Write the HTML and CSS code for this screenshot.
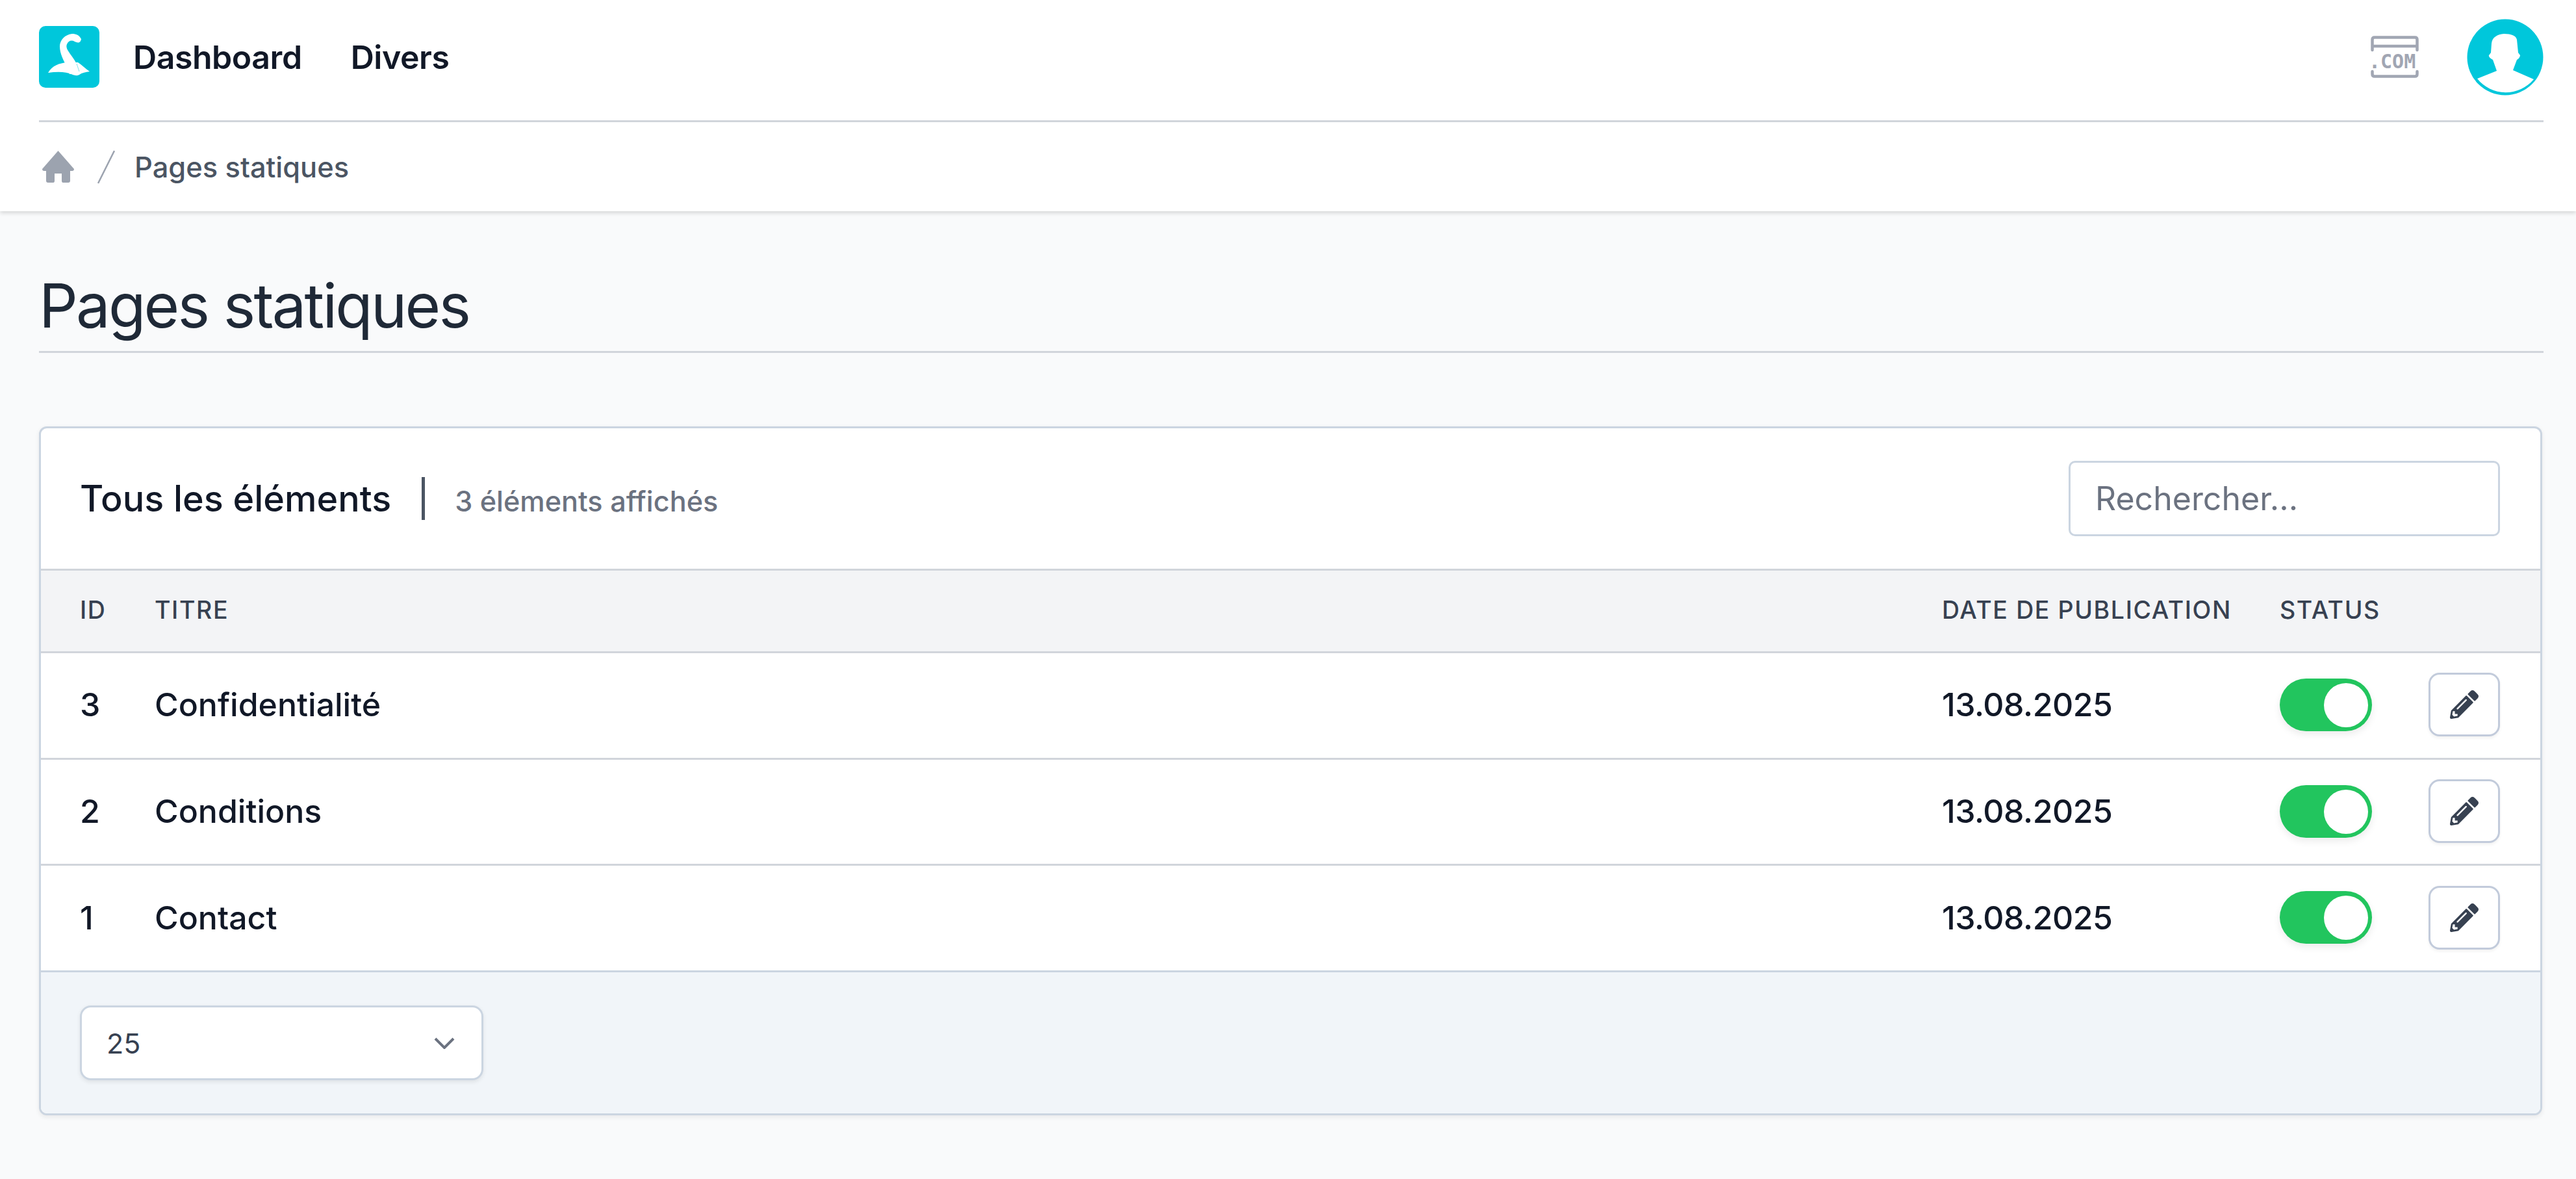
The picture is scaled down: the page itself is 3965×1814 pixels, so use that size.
FILE: index.html
```html
<!DOCTYPE html>
<html lang="fr">

<head>
     <meta charset="UTF-8">
     <title>Pages statiques</title>
     <link rel="stylesheet" href="styles.css">
</head>

<body>
     <header class="topbar">
          <nav class="mainnav">
               <div class="navleft">
                    <svg class="logo" viewBox="0 0 93 95">
                         <rect width="93" height="95" rx="10" fill="#00c7db" />
                         <path d="M65 20C62 14 57 12 51 12C40 13 32 22 32 31C32 43 38 53 43 63L47 74L63 72C61 62 55 52 48 43C44 37 41 33 43 28C45 23 50 21 55 24C59 26 64 27 65 20Z" fill="#fff" />
                         <path d="M14 72C20 61 32 57 43 56L60 56C66 60 72 66 78 70C72 71 66 72 62 75C58 77 56 76 52 75C42 70 28 70 14 72Z" fill="#fff" />
                         <path d="M58 58L62 70" stroke="#7fe3ed" stroke-width="1" fill="none" />
                    </svg>
                    <a class="navlink" href="#">Dashboard</a>
                    <a class="navlink" href="#">Divers</a>
               </div>
               <div class="navright">
                    <svg class="domain" viewBox="-4 0 78 65">
                         <path d="M2.500 22V6Q2.500 2.500 6 2.500H68Q71.500 2.500 71.500 6V22M2.500 16H71.500" fill="none" stroke="#a1a6b3" stroke-width="4.500" stroke-linecap="round" />
                         <path d="M2.500 55V59Q2.500 62.500 6 62.500H68Q71.500 62.500 71.500 59V55" fill="none" stroke="#a1a6b3" stroke-width="4.500" stroke-linecap="round" />
                         <text class="domaintext" x="-3" y="50">.COM</text>
                    </svg>
                    <svg class="avatar" viewBox="0 0 118 118">
                         <circle cx="59" cy="59" r="58.500" fill="#00c7db" />
                         <path d="M16 92L46 80L40 63C36 61 33 58 34 56L37 52L38 38C39 28 47 24 57 23C68 23 76 26 77 32L79 52L82 56C82 59 79 62 77 63L71 79L103 93A56 56 0 0 1 16 92Z" fill="#fff" />
                    </svg>
               </div>
          </nav>
          <div class="crumbs">
               <svg class="homeicon" viewBox="0 0 49 49">
                    <path d="M24.500 0L49 28Q49 31 46 31H43V46Q43 49 40 49H32Q30 49 30 46V35H19V46Q19 49 17 49H9Q6 49 6 46V31H3Q0 31 0 28Z" fill="#9ca3af" />
               </svg>
               <svg class="crumbsep" viewBox="0 0 27 52">
                    <path d="M26 1L1 51" stroke="#9ca3af" stroke-width="2.500" fill="none" />
               </svg>
               <span class="crumbtext">Pages statiques</span>
          </div>
     </header>

     <main class="content">
          <h1 class="pagetitle">Pages statiques</h1>

          <section class="card">
               <div class="cardhead">
                    <div class="cardtitle">
                         <h2>Tous les éléments</h2>
                         <span class="count">3 éléments affichés</span>
                    </div>
                    <input class="search" type="text" placeholder="Rechercher...">
               </div>

               <table class="list">
                    <thead>
                         <tr>
                              <th class="col-id">ID</th>
                              <th>Titre</th>
                              <th class="col-date">Date de publication</th>
                              <th class="col-status">Status</th>
                              <th class="col-edit"></th>
                         </tr>
                    </thead>
                    <tbody>
                         <tr>
                              <td>3</td>
                              <td>Confidentialité</td>
                              <td class="date">13.08.2025</td>
                              <td><span class="toggle"><span class="knob"></span></span></td>
                              <td><button class="editbtn"><svg viewBox="0 0 512 512"><path d="M497.900 142.100l-46.100 46.100c-4.700 4.700-12.300 4.700-17 0l-111-111c-4.700-4.700-4.700-12.300 0-17l46.100-46.100c18.700-18.700 49.100-18.700 67.900 0l60.100 60.100c18.800 18.700 18.800 49.100 0 67.900zM284.200 99.800L21.600 362.400.4 483.900c-2.900 16.400 11.400 30.600 27.800 27.800l121.500-21.300 262.600-262.600c4.700-4.700 4.700-12.300 0-17l-111-111c-4.800-4.700-12.400-4.700-17.100 0zM124.100 339.900c-5.500-5.500-5.500-14.300 0-19.800l154-154c5.500-5.500 14.300-5.500 19.800 0s5.500 14.300 0 19.800l-154 154c-5.500 5.500-14.300 5.500-19.800 0zM88 424h48v36.300l-64.500 11.300-31.100-31.100L51.700 376H88v48z" fill="#374151" /></svg></button></td>
                         </tr>
                         <tr>
                              <td>2</td>
                              <td>Conditions</td>
                              <td class="date">13.08.2025</td>
                              <td><span class="toggle"><span class="knob"></span></span></td>
                              <td><button class="editbtn"><svg viewBox="0 0 512 512"><path d="M497.900 142.100l-46.100 46.100c-4.700 4.700-12.300 4.700-17 0l-111-111c-4.700-4.700-4.700-12.300 0-17l46.100-46.100c18.700-18.700 49.100-18.700 67.900 0l60.100 60.100c18.800 18.700 18.800 49.100 0 67.900zM284.200 99.800L21.600 362.400.4 483.900c-2.900 16.400 11.400 30.600 27.800 27.800l121.500-21.300 262.600-262.600c4.700-4.700 4.700-12.300 0-17l-111-111c-4.800-4.700-12.400-4.700-17.100 0zM124.100 339.900c-5.500-5.500-5.500-14.300 0-19.800l154-154c5.500-5.500 14.300-5.500 19.800 0s5.500 14.300 0 19.800l-154 154c-5.500 5.500-14.300 5.500-19.800 0zM88 424h48v36.300l-64.500 11.300-31.100-31.100L51.700 376H88v48z" fill="#374151" /></svg></button></td>
                         </tr>
                         <tr>
                              <td>1</td>
                              <td>Contact</td>
                              <td class="date">13.08.2025</td>
                              <td><span class="toggle"><span class="knob"></span></span></td>
                              <td><button class="editbtn"><svg viewBox="0 0 512 512"><path d="M497.900 142.100l-46.100 46.100c-4.700 4.700-12.300 4.700-17 0l-111-111c-4.700-4.700-4.700-12.300 0-17l46.100-46.100c18.700-18.700 49.100-18.700 67.900 0l60.100 60.100c18.800 18.700 18.800 49.100 0 67.900zM284.200 99.800L21.600 362.400.4 483.900c-2.900 16.400 11.400 30.600 27.800 27.800l121.500-21.300 262.600-262.600c4.700-4.700 4.700-12.300 0-17l-111-111c-4.800-4.700-12.400-4.700-17.100 0zM124.100 339.900c-5.500-5.500-5.500-14.300 0-19.800l154-154c5.500-5.500 14.300-5.500 19.800 0s5.500 14.300 0 19.800l-154 154c-5.500 5.500-14.300 5.500-19.800 0zM88 424h48v36.300l-64.500 11.300-31.100-31.100L51.700 376H88v48z" fill="#374151" /></svg></button></td>
                         </tr>
                    </tbody>
               </table>

               <div class="cardfoot">
                    <div class="perpage">
                         <span>25</span>
                         <svg class="chevron" viewBox="0 0 32 18">
                              <path d="M2 2L16 16L30 2" fill="none" stroke="#6b7280" stroke-width="4" />
                         </svg>
                    </div>
               </div>
          </section>
     </main>
</body>

</html>
```

FILE: styles.css
```css
* {
     margin: 0;
     padding: 0;
     box-sizing: border-box;
}

html,
body {
     height: 100%;
}

body {
     background: #f9fafb;
     color: #111827;
     font-family: Inter, "Liberation Sans", sans-serif;
     font-size: 50px;
     overflow: hidden;
}

.topbar {
     height: 325px;
     padding: 0 50px 0 60px;
     background: #fff;
     box-shadow: 0 2.500px 6px rgba(0, 0, 0, .14);
}

.mainnav {
     display: flex;
     justify-content: space-between;
     align-items: center;
     height: 188px;
     padding-bottom: 10px;
     border-bottom: 3px solid #d1d5db;
}

.navleft {
     display: flex;
     align-items: center;
}

.logo {
     width: 93px;
     height: 95px;
     margin-right: 52px;
}

.navlink {
     margin-right: 75px;
     color: #111827;
     font-weight: 600;
     letter-spacing: -.45px;
     text-decoration: none;
}

.navright {
     display: flex;
     align-items: center;
}

.domain {
     width: 78px;
     height: 65px;
     margin-right: 74px;
}

.domaintext {
     fill: #a1a6b3;
     font-family: "DejaVu Sans Mono", monospace;
     font-size: 30px;
     font-weight: 700;
}

.avatar {
     width: 118px;
     height: 118px;
}

.crumbs {
     display: flex;
     align-items: center;
     height: 137px;
     padding-left: 5px;
}

.homeicon {
     width: 49px;
     height: 49px;
     margin-right: 36px;
}

.crumbsep {
     width: 27px;
     height: 52px;
     margin-right: 30px;
}

.crumbtext {
     color: #4b5563;
     font-size: 43.400px;
     font-weight: 500;
}

.content {
     padding: 0 50px 0 60px;
}

.pagetitle {
     height: 218px;
     padding-top: 83px;
     border-bottom: 3px solid #d1d5db;
     color: #1f2937;
     font-size: 93.750px;
     font-weight: 400;
     letter-spacing: -2.800px;
     line-height: 125px;
}

.card {
     margin-top: 113px;
     margin-right: 2px;
     border: 3px solid #cbd5e1;
     border-radius: 12px;
     background: #fff;
     box-shadow: 0 2.500px 7px rgba(0, 0, 0, .07);
     overflow: hidden;
}

.cardhead {
     display: flex;
     justify-content: space-between;
     align-items: center;
     height: 216px;
     padding: 0 62px 0 60px;
}

.cardtitle {
     display: flex;
     align-items: center;
}

.cardtitle h2 {
     padding-right: 47px;
     border-right: 5px solid #4b5563;
     color: #111827;
     font-size: 55.700px;
     font-weight: 450;
     line-height: 66px;
}

.count {
     margin-left: 46px;
     padding-top: 8px;
     color: #6b7280;
     font-size: 43.200px;
     font-weight: 450;
}

.search {
     width: 664px;
     height: 116px;
     padding: 0 38px;
     border: 3px solid #cbd5e1;
     border-radius: 10px;
     background: #fff;
     font-family: inherit;
     font-size: 50px;
     outline: none;
}

.search::placeholder {
     color: #6b7280;
     opacity: 1;
}

.list {
     width: 100%;
     border-collapse: collapse;
     table-layout: fixed;
}

.list th {
     height: 127px;
     padding: 0 0 3px 60px;
     background: #f3f4f6;
     border-top: 3px solid #d1d5db;
     border-bottom: 3px solid #d1d5db;
     color: #374151;
     font-size: 37.500px;
     font-weight: 500;
     letter-spacing: 1.600px;
     text-align: left;
     text-transform: uppercase;
}

.list td {
     height: 163.700px;
     border-bottom: 3px solid #d1d5db;
     padding-left: 60px;
     padding-bottom: 2px;
     color: #111827;
     font-weight: 500;
}

.list th:nth-child(n+2),
.list td:nth-child(n+2) {
     padding-left: 0;
}

.list td.date {
     letter-spacing: -.5px;
}

.col-id {
     width: 175px;
}

.col-date {
     width: 520px;
}

.col-status {
     width: 229px;
}

.col-edit {
     width: 172px;
}

.toggle {
     display: block;
     width: 142px;
     height: 81px;
     padding: 7px 6px;
     border-radius: 41px;
     background: #22c55e;
     box-shadow: 0 5px 12px rgba(0, 0, 0, .08);
}

.knob {
     display: block;
     width: 68px;
     height: 68px;
     margin-left: auto;
     border-radius: 50%;
     background: #fff;
}

.editbtn {
     display: flex;
     justify-content: center;
     align-items: center;
     width: 110px;
     height: 98px;
     border: 3px solid #c2cbdb;
     border-radius: 17px;
     background: #fff;
     box-shadow: 0 2.500px 4px rgba(0, 0, 0, .05);
}

.editbtn svg {
     width: 44px;
     height: 44px;
}

.cardfoot {
     height: 220px;
     padding: 51px 62px 0 60px;
     margin-top: -3px;
     border-top: 3px solid #cbd5e1;
     background: #f1f5f9;
}

.perpage {
     display: flex;
     justify-content: space-between;
     align-items: center;
     width: 621px;
     height: 115px;
     padding: 0 41px 0 38px;
     border: 3px solid #cbd5e1;
     border-radius: 17px;
     background: #fff;
     box-shadow: 0 2.500px 6px rgba(0, 0, 0, .08);
     color: #374151;
     font-size: 43px;
}

.chevron {
     width: 32px;
     height: 18px;
}
```
